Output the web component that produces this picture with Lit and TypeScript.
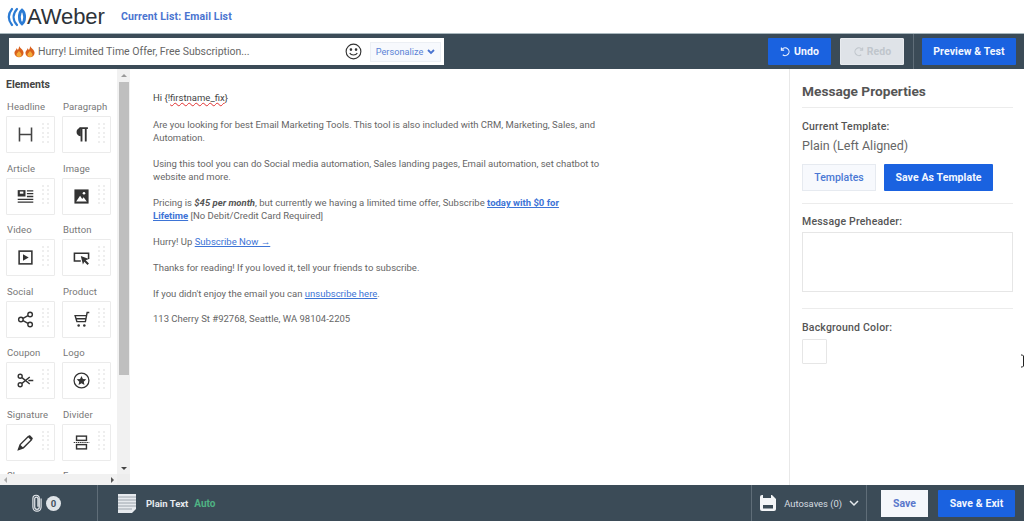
import { LitElement, html, css, svg } from "lit";
import { customElement } from "lit/decorators.js";

const I = (body: unknown, cls = "ic") =>
  html`<svg class=${cls} viewBox="0 0 24 24" fill="none" stroke="#333" stroke-width="2">${body}</svg>`;

const elements: [string, unknown][] = [
  ["Headline", svg`<path d="M3.500 2v20M20.500 2v20M3.500 12h17" stroke-width="2.200" stroke="#444"/>`],
  ["Paragraph", svg`<path d="M9 3h12M12 3v19M18 3v19" stroke-width="2.600"/><path d="M11 2.500a6 6 0 0 0 0 12z" fill="#333" stroke="none"/>`],
  ["Article", svg`<rect x="1" y="3" width="11" height="9" fill="#333" stroke="none"/><rect x="4" y="5" width="5" height="3" fill="#fff" stroke="none"/><path d="M14 4h9M14 8h9M14 12h9M1 16h22M1 20h22" stroke-width="1.800"/>`],
  ["Image", svg`<rect x="2" y="2" width="20" height="20" fill="#333" stroke="none"/><path d="M4.500 19l5.500-8 3 4.500 2-2.500 4.500 6z" fill="#fff" stroke="none"/><circle cx="15.500" cy="7.500" r="1.800" fill="#fff" stroke="none"/>`],
  ["Video", svg`<rect x="3" y="3" width="18" height="18" stroke-width="2.200"/><path d="M8.500 7.500l8 4.500-8 4.500z" fill="#333" stroke="none"/>`],
  ["Button", svg`<path d="M11 17H2V6h20v8" stroke-width="2.200"/><path d="M11 10l11.500 4-4.500 2 4.500 4.500-2 2-4.500-4.500-2 4z" fill="#333" stroke="none"/>`],
  ["Social", svg`<circle cx="5.500" cy="12" r="3.200"/><circle cx="18.500" cy="5" r="3.200"/><circle cx="18.500" cy="19" r="3.200"/><path d="M8.500 10.500l7-4M8.500 13.500l7 4"/>`],
  ["Product", svg`<path d="M23 2h-3l-2.500 13H5.500L3 6.500h16M4.500 11h13.500" stroke-width="2"/><circle cx="8" cy="20.500" r="1.800" fill="#333" stroke="none"/><circle cx="16" cy="20.500" r="1.800" fill="#333" stroke="none"/>`],
  ["Coupon", svg`<circle cx="4.500" cy="6" r="2.800"/><circle cx="4.500" cy="18" r="2.800"/><path d="M7 8l11 9M7 16L18 7M16 12h7" stroke-width="2"/>`],
  ["Logo", svg`<circle cx="12" cy="12" r="10.500" stroke-width="1.800"/><path d="M12 5.500l2 4.400 4.700.5-3.500 3.200 1 4.700-4.200-2.400-4.200 2.400 1-4.700-3.500-3.200 4.700-.5z" fill="#333" stroke="none"/>`],
  ["Signature", svg`<path d="M2 22l2.500-7L16 3.500l4.500 4.500L9 19.500z" stroke-width="1.900"/><path d="M16 3l2-1.500 4.500 4.500-1.500 2z" fill="#333" stroke="none"/><path d="M2 22l2.500-7 4.500 4.500z" fill="#333" stroke="none"/>`],
  ["Divider", svg`<rect x="5" y="3" width="14" height="6"/><rect x="5" y="15" width="14" height="6"/><path d="M1 12h22" stroke-dasharray="2 1" stroke-width="1.500"/>`],
  ["Share", ""],
  ["Free", ""],
];

const dots = html`<span class="dots">${Array.from({ length: 10 }, () => html`<i></i>`)}</span>`;

const flame = html`<svg class="flame" viewBox="0 0 12 14"><path d="M6 0c1 3 5.500 4.500 5.500 8.500A5.500 5.500 0 0 1 .5 8.500C.5 6 3 5 3 3c1 .5 1.500 1.500 1.500 2.500C5.500 4 6.300 2 6 0z" fill="#d9601c"/><path d="M6 6c.5 1.500 3 2.500 3 4.500a3 3 0 0 1-6 0C3 9 5.500 8 6 6z" fill="#f3ab3a"/></svg>`;

@customElement("app-root")
export class AppRoot extends LitElement {
  static styles = css`
    :host { display: grid; grid-template-rows: 33px 36px 416px 36px; height: 521px; width: 1024px; overflow: hidden; position: relative; font-family: Roboto, "Liberation Sans", sans-serif; color: #555; background: #fff; }
    .head { display: flex; align-items: center; padding-left: 7px; }
    .logo { display: flex; align-items: center; width: 114px; }
    .logo svg { width: 20px; height: 20px; }
    .logo span { font: 400 22px/1 "Liberation Sans", sans-serif; color: #2d3339; letter-spacing: -0.1px; margin-left: 0; }
    .list { font-size: 10.500px; font-weight: 700; color: #4a74d0; letter-spacing: .15px; }

    .bar { background: #3b4b57; display: flex; align-items: center; border-top: 1px solid #a9b7bd; }
    .subject { margin-left: 9px; width: 435px; height: 27px; background: #fff; display: flex; align-items: center; padding: 0 3px 0 5px; box-sizing: border-box; font-size: 10.500px; color: #666; }
    .flame { width: 10px; height: 13px; margin-right: 1px; }
    .subject .txt { margin-left: 2px; flex: 1; }
    .smile { width: 17px; height: 17px; margin-right: 8px; }
    .pers { width: 71px; height: 20px; background: #f7f9fd; border: 1px solid #eceff4; box-sizing: border-box; display: flex; align-items: center; justify-content: center; gap: 4px; color: #5b83d6; font-size: 9.200px; }
    .pers svg { width: 8px; height: 6px; }
    .spacer { flex: 1; }
    .btn { height: 27px; border-radius: 1px; box-sizing: border-box; display: flex; align-items: center; justify-content: center; gap: 3px; font-size: 10.500px; font-weight: 700; background: #1a62e0; color: #f3f7ff; letter-spacing: .1px; }
    .undo { width: 63px; }
    .redo { width: 64px; margin-left: 9px; background: #dfe3e8; color: #c0c6cc; border: 1px solid #e8ebef; }
    .btn svg { width: 11px; height: 11px; }
    .vr { width: 1px; align-self: stretch; background: #5f6d78; }
    .bar .vr { margin: 0 8px 0 9px; }
    .pv { width: 94px; margin-right: 8px; }

    .main { display: flex; min-height: 0; }
    .side { width: 117px; flex: none; overflow: hidden; padding: 9px 0 0 6px; box-sizing: border-box; }
    .side h3 { margin: 0; font-size: 10.500px; font-weight: 700; color: #444; line-height: 13px; }
    .grid { display: grid; grid-template-columns: 49px 49px; column-gap: 7px; row-gap: 9.500px; margin-top: 10px; }
    .lab { font-size: 9.500px; color: #777; line-height: 12px; letter-spacing: .1px; height: 15px; padding-left: 1px; }
    .card { height: 37px; border: 1px solid #ebebeb; border-radius: 1px; box-sizing: border-box; display: flex; align-items: center; position: relative; background: #fff; }
    .ic { width: 17px; height: 17px; margin-left: 10px; }
    .dots { position: absolute; right: 5px; top: 6px; display: grid; grid-template-columns: 2px 2px; gap: 2.400px 3px; }
    .dots i { width: 2px; height: 2px; background: #eeeeee; }

    .sbar { width: 13px; flex: none; background: #f1f1f1; display: flex; flex-direction: column; }
    .up, .down { display: flex; align-items: center; justify-content: center; }
    .up { height: 13px; }
    .down { height: 11px; }
    .up::before { content: ""; border: 3px solid transparent; border-top: 0; border-bottom: 3px solid #9a9a9a; }
    .down::before { content: ""; border: 3px solid transparent; border-bottom: 0; border-top: 3px solid #444; }
    .thumb { height: 293px; width: 10px; margin-left: 2px; background: #bfbfbf; }
    .track { flex: 1; }
    .corner { height: 11px; background: #ededed; }

    .hbar { position: absolute; left: 0; top: 474px; width: 117px; height: 11px; background: #f1f1f1; display: flex; justify-content: space-between; align-items: center; padding: 0 3px 0 4px; box-sizing: border-box; }
    .hbar i { border: 3px solid transparent; }
    .hbar i:first-child { border-left: 0; border-right: 3px solid #aaa; }
    .hbar i:last-child { border-right: 0; border-left: 3px solid #555; }

    .msg { flex: 1; padding: 22px 0 0 23px; font-size: 9.500px; line-height: 13.300px; color: #666; }
    .msg p { margin: 0 0 12.400px; width: 450px; }
    .msg p:first-child { margin-bottom: 13.900px; color: #444; }
    .msg a { color: #3d74d6; text-decoration: underline; }
    .msg b { color: #555; }
    .msg a b { color: inherit; }
    .sp { text-decoration: underline wavy #e03131 1px; text-underline-offset: 1px; }

    .props { width: 235px; flex: none; border-left: 1px solid #e8e8e8; box-sizing: border-box; padding: 14px 11px 0 12px; }
    .props h2 { margin: 0; font-size: 13.700px; font-weight: 700; line-height: 16px; color: #555; padding-bottom: 8px; border-bottom: 1px solid #ececec; }
    .f { font-size: 10.500px; font-weight: 500; color: #555; line-height: 12px; letter-spacing: .2px; }
    .cur { margin-top: 13px; }
    .plain { font-size: 12.500px; color: #666; line-height: 15px; margin-top: 5px; }
    .acts { display: flex; gap: 8px; margin-top: 11px; padding-bottom: 12px; border-bottom: 1px solid #ececec; }
    .tpl { width: 74px; height: 27px; background: #f7f9fd; border: 1px solid #e6eaf0; color: #4a78d4; font-size: 10.500px; font-weight: 500; display: flex; align-items: center; justify-content: center; box-sizing: border-box; }
    .sat { width: 109px; }
    .pre { margin-top: 12px; }
    .ta { height: 60px; width: 211px; border: 1px solid #e6e6e6; box-sizing: border-box; margin-top: 4px; }
    .hr2 { border-top: 1px solid #ececec; margin-top: 16px; }
    .bg { margin-top: 13px; }
    .sw { width: 25px; height: 25px; border: 1px solid #e6e6e6; border-radius: 1px; box-sizing: border-box; margin-top: 5px; }
    .cursor { position: absolute; left: 1020px; top: 354px; width: 6px; height: 14px; }

    .foot { background: #3b4b57; display: flex; align-items: center; color: #e8ecef; }
    .clip { width: 97px; display: flex; align-items: center; justify-content: flex-end; padding-right: 36px; box-sizing: border-box; gap: 4px; }
    .clip svg { width: 10px; height: 18px; }
    .zero { width: 15px; height: 15px; border-radius: 50%; background: #dfe4e8; color: #44525e; font-size: 9.500px; font-weight: 700; display: flex; align-items: center; justify-content: center; }
    .foot .vr { height: 36px; }
    .doc { width: 18px; height: 19px; margin: 0 10px 0 20px; }
    .pt { font-size: 9.500px; font-weight: 700; color: #e6eaee; }
    .auto { font-size: 10px; font-weight: 700; color: #4fb384; margin-left: 6px; }
    .saveic { width: 16px; height: 16px; margin: 0 8px; }
    .as { font-size: 9.400px; color: #d6dce0; }
    .chev { width: 10px; height: 7px; margin: 0 7px 0 7px; }
    .save { width: 47px; height: 27px; margin-left: 14px; background: #f5f7fb; color: #5b78cc; font-size: 10.500px; font-weight: 700; display: flex; align-items: center; justify-content: center; }
    .exit { width: 77px; margin: 0 9px 0 10px; }
  `;

  render() {
    return html`
      <div class="head">
        <div class="logo">
          <svg viewBox="0 0 20 20" fill="none" stroke="#2b7bd4" stroke-linecap="round">
            <path d="M5 2C1 7 1 13 5 18" stroke-width="2.200"/>
            <path d="M10 2C5.500 7 5.500 13 10 18" stroke-width="2.200"/>
            <path d="M15 3c-3.500 3-3.500 11 0 14 3.500-3 3.500-11 0-14z" stroke-width="2.800"/>
          </svg>
          <span>AWeber</span>
        </div>
        <div class="list">Current List: Email List</div>
      </div>

      <div class="bar">
        <div class="subject">
          ${flame}${flame}<span class="txt">Hurry! Limited Time Offer, Free Subscription...</span>
          <svg class="smile" viewBox="0 0 18 18" fill="none" stroke="#333" stroke-width="1.200">
            <circle cx="9" cy="9" r="7.800"/><circle cx="6.300" cy="7" r=".8" fill="#333"/><circle cx="11.700" cy="7" r=".8" fill="#333"/>
            <path d="M5 10.500c1.500 3 6.500 3 8 0"/>
          </svg>
          <div class="pers">Personalize
            <svg viewBox="0 0 8 6" fill="none" stroke="#4a74d0" stroke-width="1.800"><path d="M1 1l3 3 3-3"/></svg>
          </div>
        </div>
        <div class="spacer"></div>
        <div class="btn undo">
          <svg viewBox="0 0 12 12" fill="none" stroke="#f3f7ff" stroke-width="1.200"><path d="M3 9.500a4.200 4.200 0 1 0-.5-6M1.500 1.500v3h3"/></svg>
          Undo
        </div>
        <div class="btn redo">
          <svg viewBox="0 0 12 12" fill="none" stroke="#c0c6cc" stroke-width="1.200"><path d="M9 9.500a4.200 4.200 0 1 1 .5-6M10.500 1.500v3h-3"/></svg>
          Redo
        </div>
        <div class="vr"></div>
        <div class="btn pv">Preview &amp; Test</div>
      </div>

      <div class="main">
        <div class="side">
          <h3>Elements</h3>
          <div class="grid">
            ${elements.map(([n, p]) => html`<div><div class="lab">${n}</div><div class="card">${p ? I(p) : ""}${dots}</div></div>`)}
          </div>
        </div>
        <div class="sbar">
          <div class="up"></div><div class="thumb"></div><div class="track"></div><div class="down"></div><div class="corner"></div>
        </div>
        <div class="msg">
          <p>Hi {!<span class="sp">firstname_fix</span>}</p>
          <p>Are you looking for best Email Marketing Tools. This tool is also included with CRM, Marketing, Sales, and Automation.</p>
          <p>Using this tool you can do Social media automation, Sales landing pages, Email automation, set chatbot to website and more.</p>
          <p>Pricing is <b><i>$45 per month</i></b>, but currently we having a limited time offer, Subscribe <a><b>today with $0 for<br>Lifetime</b></a> [No Debit/Credit Card Required]</p>
          <p>Hurry! Up <a>Subscribe Now →</a></p>
          <p>Thanks for reading! If you loved it, tell your friends to subscribe.</p>
          <p>If you didn't enjoy the email you can <a>unsubscribe here</a>.</p>
          <p>113 Cherry St #92768, Seattle, WA 98104-2205</p>
        </div>
        <div class="props">
          <h2>Message Properties</h2>
          <div class="f cur">Current Template:</div>
          <div class="plain">Plain (Left Aligned)</div>
          <div class="acts">
            <div class="tpl">Templates</div>
            <div class="btn sat">Save As Template</div>
          </div>
          <div class="f pre">Message Preheader:</div>
          <div class="ta"></div>
          <div class="hr2"></div>
          <div class="f bg">Background Color:</div>
          <div class="sw"></div>
        </div>
      </div>

      <div class="foot">
        <div class="clip">
          <svg viewBox="0 0 11 18" fill="none" stroke="#e6eaee" stroke-width="1.300"><path d="M8 4v9.500a2.500 2.500 0 0 1-5 0V4a1.800 1.800 0 0 1 3.500 0v9M10 4v9.500a4.500 4.500 0 0 1-9 0V4a3.500 3.500 0 0 1 7 0"/></svg>
          <div class="zero">0</div>
        </div>
        <div class="vr"></div>
        <svg class="doc" viewBox="0 0 18 19"><path d="M0 0h18v15l-4 4H0z" fill="#e6eaee"/><path d="M0 3h18M0 6h18M0 9h18M0 12h18M0 15h14" stroke="#8a959d" stroke-width=".8"/></svg>
        <span class="pt">Plain Text</span><span class="auto">Auto</span>
        <div class="spacer"></div>
        <div class="vr"></div>
        <svg class="saveic" viewBox="0 0 16 16"><path d="M0 2a2 2 0 0 1 2-2h10l4 4v10a2 2 0 0 1-2 2H2a2 2 0 0 1-2-2z" fill="#f3f5f7"/><rect x="3" y="10" width="10" height="3.500" fill="#3b4b57"/><rect x="3" y="0" width="8" height="3" fill="#3b4b57"/></svg>
        <span class="as">Autosaves (0)</span>
        <svg class="chev" viewBox="0 0 10 7" fill="none" stroke="#e6eaee" stroke-width="1.500"><path d="M1 1l4 4 4-4"/></svg>
        <div class="vr"></div>
        <div class="save">Save</div>
        <div class="btn exit">Save &amp; Exit</div>
      </div>

      <div class="hbar"><i></i><i></i></div>
      <svg class="cursor" viewBox="0 0 6 14" fill="none" stroke="#222" stroke-width="1"><path d="M1 1h1.500l1 1v10l-1 1H1"/></svg>
    `;
  }
}
